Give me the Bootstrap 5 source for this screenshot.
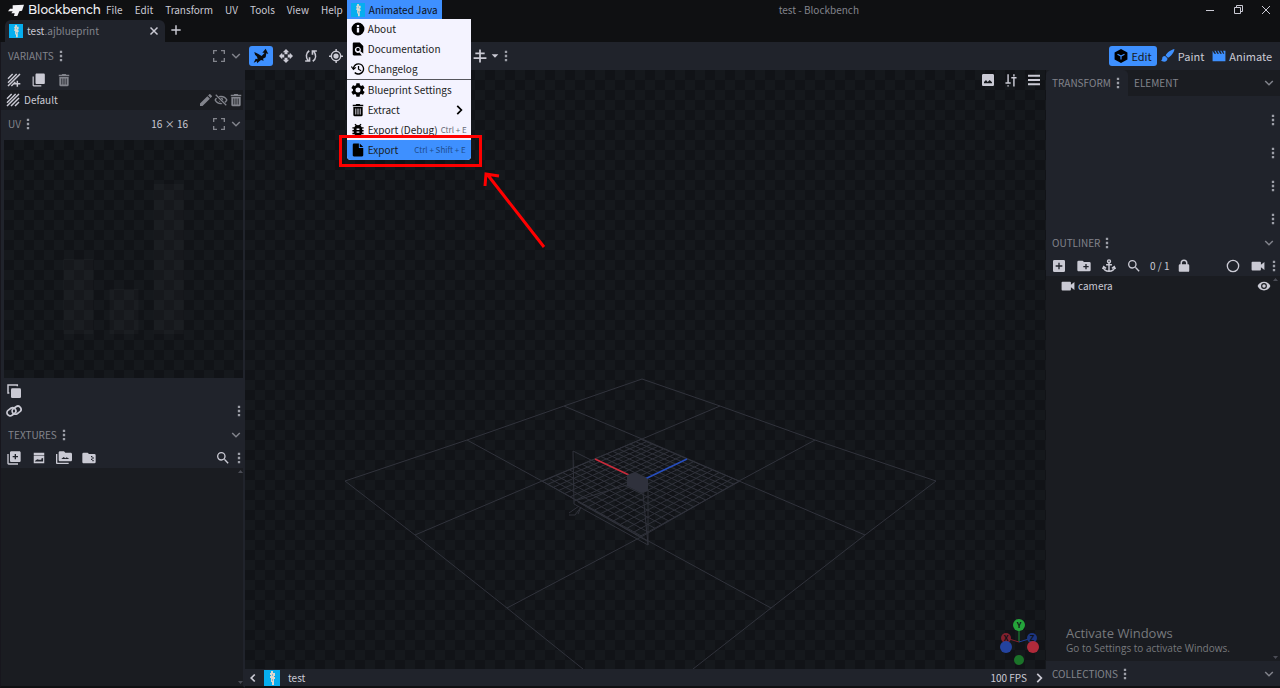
<!DOCTYPE html>
<html lang="en">
<head>
<meta charset="utf-8">
<meta name="viewport" content="width=device-width, initial-scale=1">
<title>test - Blockbench</title>
<link rel="stylesheet" href="https://cdn.jsdelivr.net/npm/bootstrap@5.3.0/dist/css/bootstrap.min.css">
<style>
:root{--ui:#20232b;--back:#1a1c21;--frame:#0f1012;--txt:#cacad4;--muted:#82848c;--accent:#3e90ff;--deep:#111317}
body{background:var(--frame);color:var(--txt);font-family:"Noto Sans CJK SC","Noto Sans",sans-serif;font-size:10px;line-height:20px}
button{border:0;background:none;color:inherit;padding:0;font:inherit}
a{color:inherit;text-decoration:none}
.ic{width:16px;height:16px;fill:currentColor;flex:none;display:block}
.ic-sm{width:14px;height:14px}
.icon-xs{width:8px;height:8px}
.muted{color:var(--muted)}
.shrinkable{min-width:0;min-height:0}
.tool{width:25px;height:20px;display:flex;align-items:center;justify-content:center;flex:none}
.tight{width:15px}
.mid{width:21px}
.dots{width:8px;height:20px;display:flex;align-items:center;justify-content:center;color:#9c9ea7;flex:none}
.after{margin-left:3px}
.titlebar{height:20px}
.menus{gap:2px}
.menus a{padding:0 5px;line-height:19px;white-space:nowrap}
.plugin{margin-left:-3px}
.brand{font-family:"Montserrat","Inter",sans-serif;font-weight:500;font-size:12px;width:101px;color:#f2f2f5}
.menus .on{background:var(--accent);color:#101216;padding:0 4px}
.win{width:28px;height:20px;display:flex;align-items:center;justify-content:center}
.tabrow{height:22px}
.doc-tab{width:160px;background:var(--ui);border-radius:6px 6px 0 0;margin-left:5px;padding:0 4px}
.side-l{width:245px;background:var(--back);border-left:1px solid #17161d;border-right:2px solid var(--ui);border-bottom:2px solid var(--frame)}
.side-r{width:234px;background:var(--back)}
.bar{background:var(--ui)}
.head{height:28px;padding:0 0 0 7px;color:var(--muted)}
.head-r{height:26px;padding:0 4px 0 6px;color:var(--muted)}
.bright{color:var(--txt)}
.low{height:27px}
.checker{background:repeating-conic-gradient(#15181c 0 25%,var(--deep) 0 50%) 0 0/20px 20px}
.uv{height:240px;margin:0 0 0 3px;border-top:2px solid var(--ui);background-clip:padding-box}
.uv svg{width:100%;height:238px;display:block}
.uv-tools{padding-top:3px}
.mode{height:20px;padding:0 4px;border-radius:3px;font-size:11px;line-height:20px;display:flex;align-items:center;gap:3px}
.on-mode{background:var(--accent);color:#15181c;padding:0 5px}
.on-mode .ic{color:#000}
.on-tool{background:var(--accent);color:#0b0d10;border-radius:3px;width:24px}
.blue{color:var(--accent)}
.under-menu{width:124px}
.scene{position:absolute;inset:0;width:100%;height:100%}
.view-tools{padding-right:1px}
.view-tools .tool{width:23px}
.axes{position:absolute;right:5px;bottom:0}
.tab-on{background:var(--ui);border-radius:5px 5px 0 0;width:82px;padding-left:6px}
.tab-off{padding-left:6px}
.sliders{gap:13px;padding:14px 3px 1px}
.tools-r{padding-right:2px}
.outl{padding:0 9px 0 15px;gap:3px}
.coll{border-bottom:2px solid var(--frame)}
.scroll-r{position:absolute;right:2px;top:0;bottom:0}
.scroll-ends{display:flex;flex-direction:column;justify-content:space-between;align-items:flex-end;color:#4a4c55}
.scroll-ends svg{width:5px;height:8px;fill:currentColor}
.menu-pop{position:absolute;top:19px;left:0;width:124px;background:#f4f3ff;color:#1b1d22;border-radius:0 0 4px 4px;z-index:5}
.menu-pop a{display:flex;align-items:center;height:20px;padding:0 5px 1px 4px;gap:3px}
.menu-pop .ic{color:#000;width:14px;height:14px}
.menu-pop .hit{background:var(--accent);border-radius:0 0 4px 4px}
.menu-pop kbd{background:none;color:#686b78;font:8px/20px "Noto Sans CJK SC",sans-serif;padding:0;margin-left:auto;white-space:nowrap}
.menu-pop .hit kbd{color:#1f4c8c}
.menu-pop hr{margin:0;border-top:1px solid #55565c;opacity:1}
.callout{position:absolute;left:-8px;top:116px;width:143px;height:32px;border:3px solid #f00}
.callout-arrow{position:absolute;left:131px;top:147px;width:80px;height:90px}
.watermark{position:absolute;left:20px;bottom:34px;font-family:"Open Sans",sans-serif;color:#77797d;z-index:2}
.watermark strong{font-size:13px;font-weight:400;line-height:18px;display:block}
.watermark span{font-size:10px;line-height:12px;display:block}
.foot{height:19px;border-bottom:2px solid var(--frame)}
</style>
</head>
<body class="vh-100 d-flex flex-column overflow-hidden">
<svg width="0" height="0" class="position-absolute" aria-hidden="true">
<symbol id="i-dots" viewBox="0 0 24 24"><path d="M10 3h4v4h-4zM10 10h4v4h-4zM10 17h4v4h-4z"/></symbol>
<symbol id="i-down" viewBox="0 0 24 24"><path d="M17.6 7.6 12 13.2 6.4 7.6 4.6 9.4l7.4 7.4 7.4-7.4z"/></symbol>
<symbol id="i-full" viewBox="0 0 24 24"><path d="M3 15h2v4h4v2H3zM3 9V3h6v2H5v4zM15 19h4v-4h2v6h-6zM15 3h6v6h-2V5h-4z"/></symbol>
<symbol id="i-stripes" viewBox="0 0 24 24"><path d="M3 10 10 3M3 16 16 3M3 21 21 3M9 21 21 9M15 21l6-6" stroke="currentColor" stroke-width="2.2"/></symbol>
<symbol id="i-stripes-add" viewBox="0 0 24 24"><path d="M3 10 10 3M3 16 16 3M3 21 21 3M8 21l6-6M17 13v9M12.500 17.500h9" stroke="currentColor" stroke-width="2.2"/></symbol>
<symbol id="i-copy" viewBox="0 0 24 24"><path d="M3 6H1v15c0 1.100.9 2 2 2h13v-2H3zM20 1H8c-1.100 0-2 .9-2 2v14c0 1.100.9 2 2 2h12c1.100 0 2-.9 2-2V3c0-1.100-.9-2-2-2z"/></symbol>
<symbol id="i-trash" viewBox="0 0 24 24"><path fill-rule="evenodd" d="M4 20.500c0 1.100.9 2 2 2h12c1.100 0 2-.9 2-2V7H4zM21 3h-5l-1-1.500H9L8 3H3v2.500h18zM7.500 9.500H9v10H7.500zm3.700 0h1.600v10h-1.600zm3.800 0h1.500v10H15z"/></symbol>
<symbol id="i-edit" viewBox="0 0 24 24"><path d="M3 17.250V21h3.750L17.810 9.940l-3.750-3.750zM20.710 7.040a1 1 0 0 0 0-1.410l-2.340-2.340a1 1 0 0 0-1.410 0l-1.830 1.830 3.750 3.750z"/></symbol>
<symbol id="i-eye" viewBox="0 0 24 24"><path d="M12 4.500C7 4.500 2.730 7.610 1 12c1.730 4.390 6 7.500 11 7.500s9.270-3.110 11-7.500c-1.730-4.390-6-7.500-11-7.500zM12 17a5 5 0 1 1 0-10 5 5 0 0 1 0 10zm0-8a3 3 0 1 0 0 6 3 3 0 0 0 0-6z"/></symbol>
<symbol id="i-eye-off" viewBox="0 0 24 24"><path d="M2 12c4-8 16-8 20 0-4 8-16 8-20 0z" fill="none" stroke="currentColor" stroke-width="2.400"/><circle cx="12" cy="12" r="4"/><path d="M2 3l19 19" stroke="#1a1c21" stroke-width="5"/><path d="M3 3l18 18" stroke="currentColor" stroke-width="2.200"/></symbol>
<symbol id="i-search" viewBox="0 0 24 24"><path d="M15.500 14h-.79l-.28-.27A6.470 6.470 0 0 0 16 9.500 6.500 6.500 0 1 0 9.500 16c1.610 0 3.090-.59 4.230-1.570l.27.28v.79l5 4.990L20.490 19zm-6 0a4.500 4.500 0 1 1 0-9 4.500 4.500 0 0 1 0 9z"/></symbol>
<symbol id="i-info" viewBox="0 0 24 24"><path d="M12 1a11 11 0 1 0 0 22 11 11 0 0 0 0-22zm2 17h-4v-8h4zm0-9.500h-4V5h4z"/></symbol>
<symbol id="i-find" viewBox="0 0 24 24"><path d="M21 19.600V7l-6-6H5c-1.100 0-2 .9-2 2v18c0 1.100.9 2 2 2h13.500l-4-5A5.200 5.200 0 1 1 17 13c0 1-.3 2-.8 2.800zM9 13a3 3 0 1 0 6 0 3 3 0 0 0-6 0z"/></symbol>
<symbol id="i-history" viewBox="0 0 24 24"><path d="M13 2a10 10 0 0 0-9.800 8L1.500 7 0 8.500 4 14l5-4-1-1.500-2.500 1.600A7.500 7.500 0 1 1 7.500 17l-2 2A10 10 0 1 0 13 2zm-1.200 5v6l5 3 1.100-1.800-3.900-2.400V7z"/></symbol>
<symbol id="i-gear" viewBox="2 2 20 20"><path d="M19.140 12.940c.04-.3.060-.61.060-.94 0-.32-.02-.64-.07-.94l2.030-1.580c.18-.14.230-.41.120-.61l-1.920-3.320c-.12-.22-.37-.29-.59-.22l-2.390.96c-.5-.38-1.030-.7-1.620-.94l-.36-2.540c-.04-.24-.24-.41-.48-.41h-3.840c-.24 0-.43.170-.47.410l-.36 2.540c-.59.240-1.130.570-1.620.940l-2.390-.96c-.22-.08-.47 0-.59.220L2.740 8.870c-.12.210-.08.470.120.610l2.030 1.580c-.05.300-.09.630-.09.940s.02.640.070.940l-2.030 1.580c-.18.140-.23.410-.12.610l1.920 3.320c.12.220.370.290.590.220l2.390-.96c.5.380 1.030.7 1.620.940l.36 2.540c.05.240.240.410.480.410h3.840c.24 0 .44-.17.470-.41l.36-2.540c.59-.24 1.130-.56 1.620-.94l2.390.960c.22.080.470 0 .59-.22l1.920-3.320c.12-.22.070-.47-.12-.61zM12 15.600a3.600 3.600 0 1 1 0-7.200 3.600 3.600 0 0 1 0 7.200z"/></symbol>
<symbol id="i-bug" viewBox="2 2 20 20"><path d="M20 8h-2.810c-.45-.78-1.070-1.450-1.820-1.960L17 4.410 15.590 3l-2.170 2.170a6 6 0 0 0-2.830 0L8.410 3 7 4.410l1.620 1.630C7.880 6.550 7.260 7.220 6.810 8H4v2h2.090L6 12H4v2h2l.09 2H4v2h2.810a6 6 0 0 0 10.380 0H20v-2h-2.090L18 14h2v-2h-2l-.09-2H20zm-6 8h-4v-2h4zm0-4h-4v-2h4z"/></symbol>
<symbol id="i-file" viewBox="0 0 24 24"><path d="M5 1a2 2 0 0 0-2 2v18c0 1.100.9 2 2 2h14a2 2 0 0 0 2-2V8.500h-7.500V1zM15 1v6h6z"/></symbol>
<symbol id="i-cam" viewBox="0 0 24 24"><path d="M17 10V6c0-1-.5-1.500-1.500-1.500h-13C1.500 4.500 1 5 1 6v12c0 1 .5 1.500 1.500 1.500h13c1 0 1.500-.5 1.500-1.500v-4l6 5V5z"/></symbol>
<symbol id="i-lock" viewBox="0 0 24 24"><path d="M19 9h-1V7A6 6 0 0 0 6 7v2H5a2 2 0 0 0-2 2v9c0 1.100.9 2 2 2h14a2 2 0 0 0 2-2v-9a2 2 0 0 0-2-2zM8.500 7a3.500 3.500 0 0 1 7 0v2h-7z"/></symbol>
<symbol id="i-addbox" viewBox="0 0 24 24"><path d="M19 3H5a2 2 0 0 0-2 2v14a2 2 0 0 0 2 2h14a2 2 0 0 0 2-2V5a2 2 0 0 0-2-2zm-2 10h-4v4h-2v-4H7v-2h4V7h2v4h4z"/></symbol>
<symbol id="i-folder-add" viewBox="0 0 24 24"><path d="M20 6h-8l-2-2H4a2 2 0 0 0-2 2v12c0 1.110.89 2 2 2h16a2 2 0 0 0 2-2V8a2 2 0 0 0-2-2zm-1 8h-3v3h-2v-3h-3v-2h3V9h2v3h3z"/></symbol>
<symbol id="i-image" viewBox="0 0 24 24"><path d="M21 19V5c0-1.100-.9-2-2-2H5c-1.100 0-2 .9-2 2v14c0 1.100.9 2 2 2h14c1.100 0 2-.9 2-2zM6 17v-2l3-3 2.500 3 3-3L18 15.500V17z"/></symbol>
<symbol id="i-lib-add" viewBox="0 0 24 24"><path d="M4 6H2v14c0 1.100.9 2 2 2h14v-2H4zm16-4H8c-1.100 0-2 .9-2 2v12c0 1.100.9 2 2 2h12c1.100 0 2-.9 2-2V4c0-1.100-.9-2-2-2zm-2 9h-3v3h-2v-3h-3V9h3V6h2v3h3z"/></symbol>
<symbol id="i-pic" viewBox="0 0 24 24"><path d="M3 3h18v4.500H3zM3 8.500h18V21H3zM5 18h14v-6l-3 1v2h-4l-3-1-4 3z" fill-rule="evenodd"/></symbol>
<symbol id="i-pics" viewBox="0 0 24 24"><path d="M2 6H0v13c0 1.500.9 2 2 2h17v-2H2zM22 4h-8l-2-2H6c-1.100 0-2 .9-2 2v11c0 1.100.9 2 2 2h16c1.100 0 2-.9 2-2V6c0-1.100-.9-2-2-2zM8 13.500l3.500-3 2.500 2 2-1.500 4 2.500z"/></symbol>
<symbol id="i-zip" viewBox="0 0 24 24"><path d="M20 6h-8l-2-2H4a2 2 0 0 0-2 2v12c0 1.100.9 2 2 2h16a2 2 0 0 0 2-2V8a2 2 0 0 0-2-2z"/><path d="M15 9h2v2h-2zM17 11h2v2h-2zM15 13h2v2h-2zM17 15h2v2h-2z" fill="#20232b"/></symbol>
<symbol id="i-dup" viewBox="0 0 24 24"><path d="M5 15H3V3h14v2" fill="none" stroke="currentColor" stroke-width="2.200"/><rect x="7.500" y="8" width="15" height="14.500" rx="2"/></symbol>
<symbol id="i-link" viewBox="0 0 24 24"><g fill="none" stroke="currentColor" stroke-width="2.600"><rect x="1" y="8.500" width="14" height="9.500" rx="4.700" transform="rotate(-35 8 13)"/><rect x="9" y="6" width="14" height="9.500" rx="4.700" transform="rotate(-35 16 11)"/></g></symbol>
<symbol id="i-menu" viewBox="0 0 24 24"><path d="M3 4h18v3H3zM3 10.500h18v3H3zM3 17h18v3H3z"/></symbol>
<symbol id="i-tune" viewBox="0 0 24 24"><path d="M7 2v15M7 21v2M2.500 17h9M17 9v14M17 2v4M12.500 8h9" fill="none" stroke="currentColor" stroke-width="2.500"/></symbol>
<symbol id="i-move" viewBox="0 0 24 24"><path d="M12 0l5.500 5.500h-3V9h-5V5.500h-3zM12 24l5.500-5.500h-3V15h-5v3.500h-3zM0 12l5.500-5.500v3H9v5H5.500v3zM24 12l-5.500-5.500v3H15v5h3.500v3z"/></symbol>
<symbol id="i-rotate" viewBox="0 0 24 24"><g fill="none" stroke="currentColor" stroke-width="2.800"><path d="M9 3C3 7 3 14 7 20M15 21c6-4 6-11 2-17M2 20.500h7.500V14M22 3.500h-7.500V10"/></g></symbol>
<symbol id="i-pivot" viewBox="0 0 24 24"><circle cx="12" cy="12" r="8" fill="none" stroke="currentColor" stroke-width="2.500"/><circle cx="12" cy="12" r="4.500"/><path d="M11 0h2.500v4H11zM11 20h2.500v4H11zM0 11h4v2.500H0zM20 11h4v2.500h-4z"/></symbol>
<symbol id="i-gizmo" viewBox="0 0 24 24"><path d="M2 6l6 3 5 3 4-4V7h-3l5-6 4 8-3-1-1 6-4 2 1 3-4-1-6 5v-3l-5 2 3-6 3 1-1-4-3-3z"/></symbol>
<symbol id="i-align" viewBox="0 0 24 24"><path d="M10.500 1h3v22h-3zM4 6h16v3H4zM1 14h22v3H1z"/></symbol>
<symbol id="i-caret" viewBox="0 0 24 24"><path d="M2 7h20L12 17z"/></symbol>
<symbol id="i-cube" viewBox="0 0 24 24"><path d="M12 0 1 6v12l11 6 11-6V6z"/><path d="M6 9l6 3 6-3M12 12v6" stroke="#3e90ff" stroke-width="2" fill="none"/></symbol>
<symbol id="i-brush" viewBox="0 0 24 24"><path d="M23 0c-4 0-14 7-15 11l4 4C17 13 23 5 23 0zM7 12c-4 0-5 2-5 5 0 1-1 2-2 2 2 4 12 4 11-3z"/></symbol>
<symbol id="i-clap" viewBox="0 0 24 24"><path d="M1 3l3 5h3L4 3h2l3 5h3L9 3h2l3 5h3l-3-5h2l3 5h2l-2-5h4v18H1z"/></symbol>
<symbol id="i-anchor" viewBox="0 0 24 24"><g fill="none" stroke="currentColor" stroke-width="2.500"><circle cx="12" cy="4" r="2.500"/><path d="M12 7v14M7 10h10M2 14c1 5 5 7 10 7s9-2 10-7M1 17l2-4 4 3M23 17l-2-4-4 3"/></g></symbol>
<symbol id="i-circle" viewBox="0 0 24 24"><circle cx="12" cy="12" r="8.500" fill="none" stroke="currentColor" stroke-width="2"/></symbol>
<symbol id="i-x" viewBox="0 0 24 24"><path d="M6 6l12 12M18 6 6 18" stroke="currentColor" stroke-width="2.500"/></symbol>
<symbol id="i-plus" viewBox="0 0 24 24"><path d="M12 4v16M4 12h16" stroke="currentColor" stroke-width="2.500"/></symbol>
<symbol id="i-left" viewBox="0 0 24 24"><path d="M15 6l-6 6 6 6" fill="none" stroke="currentColor" stroke-width="3"/></symbol>
<symbol id="i-right" viewBox="0 0 24 24"><path d="M9 5l7 7-7 7" fill="none" stroke="currentColor" stroke-width="3"/></symbol>
<symbol id="i-aj" viewBox="0 0 16 16"><path fill="#06aeef" d="M0 0h16v16H0z"/><path fill="#ddd8cf" d="M7 1h2v2h2v3h-1v1h1v2h-1v6H8v-3H7V8H6V6h1V5H6V3h1z"/><path fill="#8fb8c8" d="M8 4h1v2H8zM8 9h1v2H8z"/></symbol>
</svg>

<header>
  <div class="titlebar d-flex">
    <div class="brand d-flex align-items-center gap-1 ps-2">
      <svg class="ic" viewBox="0 0 24 20"><path d="M7 3 24 2 21 11 17 12 14 19H9l1-4H5l2-3H0l3-4h4z"/></svg>
      <span class="lh-1">Blockbench</span>
    </div>
    <nav class="menus d-flex" aria-label="Main menu">
      <a href="#">File</a><a href="#">Edit</a><a href="#">Transform</a><a href="#">UV</a><a href="#">Tools</a><a href="#">View</a><a href="#">Help</a>
      <div class="plugin position-relative">
        <a href="#" class="on d-flex align-items-center gap-1" aria-expanded="true"><svg class="ic ic-sm"><use href="#i-aj"/></svg>Animated Java</a>
        <div class="menu-pop">
          <a href="#"><svg class="ic"><use href="#i-info"/></svg>About</a>
          <a href="#"><svg class="ic"><use href="#i-find"/></svg>Documentation</a>
          <a href="#"><svg class="ic"><use href="#i-history"/></svg>Changelog</a>
          <hr>
          <a href="#"><svg class="ic"><use href="#i-gear"/></svg>Blueprint Settings</a>
          <a href="#"><svg class="ic"><use href="#i-trash"/></svg>Extract<svg class="ic ms-auto"><use href="#i-right"/></svg></a>
          <a href="#"><svg class="ic"><use href="#i-bug"/></svg>Export (Debug)<kbd>Ctrl + E</kbd></a>
          <a href="#" class="hit"><svg class="ic"><use href="#i-file"/></svg>Export<kbd>Ctrl + Shift + E</kbd></a>
          <div class="callout"></div>
          <svg class="callout-arrow" viewBox="0 0 80 90" fill="none" stroke="#f00" stroke-width="3"><path d="M66 81 9 8M7 20 8 8 21 10"/></svg>
        </div>
      </div>
    </nav>
    <div class="flex-grow-1 text-center muted">test - Blockbench</div>
    <div class="d-flex">
      <button class="win" aria-label="Minimize"><svg class="ic ic-sm" viewBox="0 0 14 14"><path d="M3 7h8v1H3z"/></svg></button>
      <button class="win" aria-label="Restore"><svg class="ic ic-sm" viewBox="0 0 14 14"><path fill="none" stroke="currentColor" d="M3.500 4.500h6v6h-6zM5.500 4V2.500h6v6H10"/></svg></button>
      <button class="win" aria-label="Close"><svg class="ic ic-sm" viewBox="0 0 14 14"><path stroke="currentColor" d="M3 3l8 8M11 3l-8 8"/></svg></button>
    </div>
  </div>
  <div class="tabrow d-flex">
    <div class="doc-tab d-flex align-items-center gap-1">
      <svg class="ic ic-sm"><use href="#i-aj"/></svg><span>test<span class="muted">.ajblueprint</span></span>
      <button class="ms-auto" aria-label="Close tab"><svg class="ic ic-sm"><use href="#i-x"/></svg></button>
    </div>
    <button class="tool mid" aria-label="New tab"><svg class="ic ic-sm"><use href="#i-plus"/></svg></button>
  </div>
</header>

<div class="d-flex flex-grow-1 shrinkable">
  <aside class="side-l d-flex flex-column flex-shrink-0">
    <div class="bar">
      <div class="head d-flex align-items-center">VARIANTS<span class="dots after"><svg class="ic ic-sm"><use href="#i-dots"/></svg></span>
        <button class="ms-auto tool mid" aria-label="Expand"><svg class="ic"><use href="#i-full"/></svg></button><button aria-label="Collapse"><svg class="ic ic-sm"><use href="#i-down"/></svg></button></div>
      <div class="d-flex">
        <button class="tool" aria-label="Add variant"><svg class="ic"><use href="#i-stripes-add"/></svg></button>
        <button class="tool" aria-label="Duplicate"><svg class="ic ic-sm"><use href="#i-copy"/></svg></button>
        <button class="tool muted" aria-label="Delete"><svg class="ic ic-sm"><use href="#i-trash"/></svg></button>
      </div>
    </div>
    <div class="d-flex align-items-center">
      <span class="tool tight ms-1"><svg class="ic"><use href="#i-stripes"/></svg></span><span class="ms-1">Default</span>
      <span class="ms-auto d-flex muted">
      <button class="tool tight" aria-label="Rename"><svg class="ic"><use href="#i-edit"/></svg></button>
      <button class="tool tight" aria-label="Hide"><svg class="ic ic-sm"><use href="#i-eye-off"/></svg></button>
      <button class="tool tight" aria-label="Remove"><svg class="ic ic-sm"><use href="#i-trash"/></svg></button></span>
    </div>
    <div class="bar">
      <div class="head d-flex align-items-center">UV<span class="dots after"><svg class="ic ic-sm"><use href="#i-dots"/></svg></span>
        <span class="ms-auto me-3 bright">16 × 16</span>
        <button class="tool mid ms-1" aria-label="Expand"><svg class="ic"><use href="#i-full"/></svg></button><button aria-label="Collapse"><svg class="ic ic-sm"><use href="#i-down"/></svg></button></div>
      <div class="uv checker"><svg viewBox="0 0 238 238" preserveAspectRatio="none" fill="#fff" fill-opacity=".025"><path d="M59 119h30v75H59zM105 149h29v45h-29zM149 44h30v150h-30z"/></svg></div>
      <div class="uv-tools d-flex"><button class="tool" aria-label="Copy faces"><svg class="ic"><use href="#i-dup"/></svg></button></div>
      <div class="d-flex"><button class="tool" aria-label="Link"><svg class="ic"><use href="#i-link"/></svg></button><span class="dots ms-auto"><svg class="ic ic-sm"><use href="#i-dots"/></svg></span></div>
      <div class="head low d-flex align-items-center">TEXTURES<span class="dots after"><svg class="ic ic-sm"><use href="#i-dots"/></svg></span>
        <button class="ms-auto" aria-label="Collapse"><svg class="ic ic-sm"><use href="#i-down"/></svg></button></div>
      <div class="d-flex">
        <button class="tool" aria-label="Import texture"><svg class="ic"><use href="#i-lib-add"/></svg></button>
        <button class="tool" aria-label="Create texture"><svg class="ic ic-sm"><use href="#i-pic"/></svg></button>
        <button class="tool" aria-label="Texture group"><svg class="ic"><use href="#i-pics"/></svg></button>
        <button class="tool" aria-label="Resource pack"><svg class="ic"><use href="#i-zip"/></svg></button>
        <button class="tool ms-auto" aria-label="Search textures"><svg class="ic"><use href="#i-search"/></svg></button>
        <span class="dots"><svg class="ic ic-sm"><use href="#i-dots"/></svg></span>
      </div>
    </div>
    <div class="scroll-ends flex-grow-1" aria-hidden="true"><svg viewBox="0 0 5 8"><path d="M0 5h5L2.500 2z"/></svg><svg viewBox="0 0 5 8"><path d="M0 3h5L2.500 6z"/></svg></div>
  </aside>

  <div class="d-flex flex-column flex-grow-1 shrinkable">
    <div class="bar d-flex align-items-center head bright ps-1 pe-1">
      <button class="tool on-tool" aria-label="Gizmo"><svg class="ic"><use href="#i-gizmo"/></svg></button>
      <button class="tool" aria-label="Move"><svg class="ic ic-sm"><use href="#i-move"/></svg></button>
      <button class="tool" aria-label="Rotate"><svg class="ic ic-sm"><use href="#i-rotate"/></svg></button>
      <button class="tool" aria-label="Pivot"><svg class="ic ic-sm"><use href="#i-pivot"/></svg></button>
      <span class="under-menu"></span>
      <button class="tool tight" aria-label="Align"><svg class="ic ic-sm"><use href="#i-align"/></svg></button>
      <button class="tool tight" aria-label="Align options"><svg class="ic icon-xs"><use href="#i-caret"/></svg></button>
      <span class="dots"><svg class="ic ic-sm"><use href="#i-dots"/></svg></span>
      <div class="ms-auto d-flex">
        <button class="mode on-mode"><svg class="ic ic-sm"><use href="#i-cube"/></svg>Edit</button>
        <button class="mode"><svg class="ic ic-sm blue"><use href="#i-brush"/></svg>Paint</button>
        <button class="mode"><svg class="ic ic-sm blue"><use href="#i-clap"/></svg>Animate</button>
      </div>
    </div>
    <div class="d-flex flex-grow-1 shrinkable">
      <main class="d-flex flex-column flex-grow-1">
        <div class="checker flex-grow-1 position-relative">
          <svg class="scene" viewBox="0 0 801 599" preserveAspectRatio="xMidYMid slice" fill="none" stroke="#30323b">
            <path d="M338 599 262 538 170 465 100 411 222 370 319 336 397 309 475 336 570 370 691 411 620 465 526 538 448 599M319 336 397 369 494 411 620 465M222 370 297 411 396 467 526 538M475 336 397 369 297 411 170 465M570 370 494 411 396 467 262 538"/>
            <path id="grid"/>
            <path d="M328 381 329 434 403 475V420M329 431 382 415M398 423 403 475M333 432 402 471M328 381 350 392M324 445H330L336 437M324 443 334 436M333 444 336 437"/>
            <path stroke="#c92a3a" stroke-width="1.500" d="M350 389 384 405"/><path stroke="#264dbd" stroke-width="1.500" d="M400 409 442 389"/>
            <path fill="#2f313c" stroke="none" d="M382 405 390 402 403 409 403 421 396 423 382 416z"/>
          </svg>
          <div class="view-tools d-flex justify-content-end position-relative">
            <button class="tool" aria-label="Background"><svg class="ic"><use href="#i-image"/></svg></button>
            <button class="tool" aria-label="View options"><svg class="ic ic-sm"><use href="#i-tune"/></svg></button>
            <button class="tool" aria-label="Menu"><svg class="ic"><use href="#i-menu"/></svg></button>
          </div>
          <svg class="axes" viewBox="0 0 42 50" width="42" height="50" aria-label="Orientation">
            <path stroke="#1f8f35" d="M20 23V8"/><path stroke="#82202e" d="M20 23 7 19"/><path stroke="#20409a" d="M20 23 33 19"/>
            <circle cx="7" cy="19" r="5" fill="#82202e"/><circle cx="33" cy="19" r="5" fill="#1c3580"/><circle cx="20" cy="6" r="6" fill="#25a53b"/>
            <circle cx="7" cy="28" r="6" fill="#24439f"/><circle cx="34" cy="28" r="6" fill="#b02a3a"/><circle cx="20" cy="41" r="5" fill="#1b7329"/>
            <g font-size="8" text-anchor="middle" fill="#111317" font-weight="700"><text x="20" y="9">Y</text><text x="7" y="22">X</text><text x="33" y="22">Z</text></g>
          </svg>
        </div>
        <div class="bar foot d-flex align-items-center">
          <button class="tool tight" aria-label="Previous"><svg class="ic ic-sm"><use href="#i-left"/></svg></button>
          <svg class="ic ms-1"><use href="#i-aj"/></svg><span class="ms-2">test</span>
          <span class="ms-auto">100 FPS</span>
          <button class="tool tight ms-1" aria-label="Next"><svg class="ic ic-sm"><use href="#i-right"/></svg></button>
        </div>
      </main>
      <aside class="side-r d-flex flex-column flex-shrink-0 position-relative">
        <div class="head-r ps-0 d-flex align-items-stretch">
          <div class="tab-on d-flex align-items-center">TRANSFORM<span class="dots after"><svg class="ic ic-sm"><use href="#i-dots"/></svg></span></div>
          <div class="tab-off d-flex align-items-center">ELEMENT</div>
          <button class="ms-auto" aria-label="Collapse"><svg class="ic ic-sm"><use href="#i-down"/></svg></button>
        </div>
        <div class="bar">
          <div class="d-flex flex-column align-items-end sliders"><span class="dots"><svg class="ic ic-sm"><use href="#i-dots"/></svg></span><span class="dots"><svg class="ic ic-sm"><use href="#i-dots"/></svg></span><span class="dots"><svg class="ic ic-sm"><use href="#i-dots"/></svg></span><span class="dots"><svg class="ic ic-sm"><use href="#i-dots"/></svg></span></div>
          <div class="head-r d-flex align-items-center">OUTLINER<span class="dots after"><svg class="ic ic-sm"><use href="#i-dots"/></svg></span>
            <button class="ms-auto" aria-label="Collapse"><svg class="ic ic-sm"><use href="#i-down"/></svg></button></div>
          <div class="d-flex tools-r">
            <button class="tool" aria-label="Add element"><svg class="ic"><use href="#i-addbox"/></svg></button>
            <button class="tool" aria-label="Add group"><svg class="ic"><use href="#i-folder-add"/></svg></button>
            <button class="tool" aria-label="Add locator"><svg class="ic ic-sm"><use href="#i-anchor"/></svg></button>
            <button class="tool" aria-label="Search"><svg class="ic"><use href="#i-search"/></svg></button>
            <span class="px-1">0 / 1</span>
            <button class="tool mid" aria-label="Lock"><svg class="ic ic-sm"><use href="#i-lock"/></svg></button>
            <button class="tool ms-auto" aria-label="Toggle"><svg class="ic"><use href="#i-circle"/></svg></button>
            <button class="tool" aria-label="Add camera"><svg class="ic ic-sm"><use href="#i-cam"/></svg></button>
            <span class="dots"><svg class="ic ic-sm"><use href="#i-dots"/></svg></span>
          </div>
        </div>
        <div class="flex-grow-1 position-relative">
          <div class="d-flex align-items-center outl">
            <svg class="ic ic-sm"><use href="#i-cam"/></svg><span>camera</span>
            <button class="ms-auto" aria-label="Visibility"><svg class="ic ic-sm"><use href="#i-eye"/></svg></button>
          </div>
          <div class="scroll-ends scroll-r" aria-hidden="true"><svg viewBox="0 0 5 8"><path d="M0 5h5L2.500 2z"/></svg><svg viewBox="0 0 5 8"><path d="M0 3h5L2.500 6z"/></svg></div>
        </div>
        <div class="bar head-r low d-flex align-items-center coll">COLLECTIONS<span class="dots after"><svg class="ic ic-sm"><use href="#i-dots"/></svg></span>
          <button class="ms-auto" aria-label="Collapse"><svg class="ic ic-sm"><use href="#i-down"/></svg></button></div>
        <div class="watermark"><strong>Activate Windows</strong><span>Go to Settings to activate Windows.</span></div>
      </aside>
    </div>
  </div>
</div>
<script src="https://cdn.jsdelivr.net/npm/bootstrap@5.3.0/dist/js/bootstrap.bundle.min.js"></script>
<script>
// Perspective projection of the 16 x 16 floor grid
const project = (u, v) => {
  const s = u + v, w = 1 - .115 * s;
  return Math.round((396 + 87.3 * (u - v) / w) * 10) / 10 + ' ' + Math.round(((439.3 - 13.35 * s) / w - 70) * 10) / 10;
};
let d = '';
for (let i = 0; i <= 16; i++) {
  const t = i / 16;
  d += `M${project(t, 0)}L${project(t, 1)}M${project(0, t)}L${project(1, t)}`;
}
document.getElementById('grid').setAttribute('d', d);
</script>
</body>
</html>
